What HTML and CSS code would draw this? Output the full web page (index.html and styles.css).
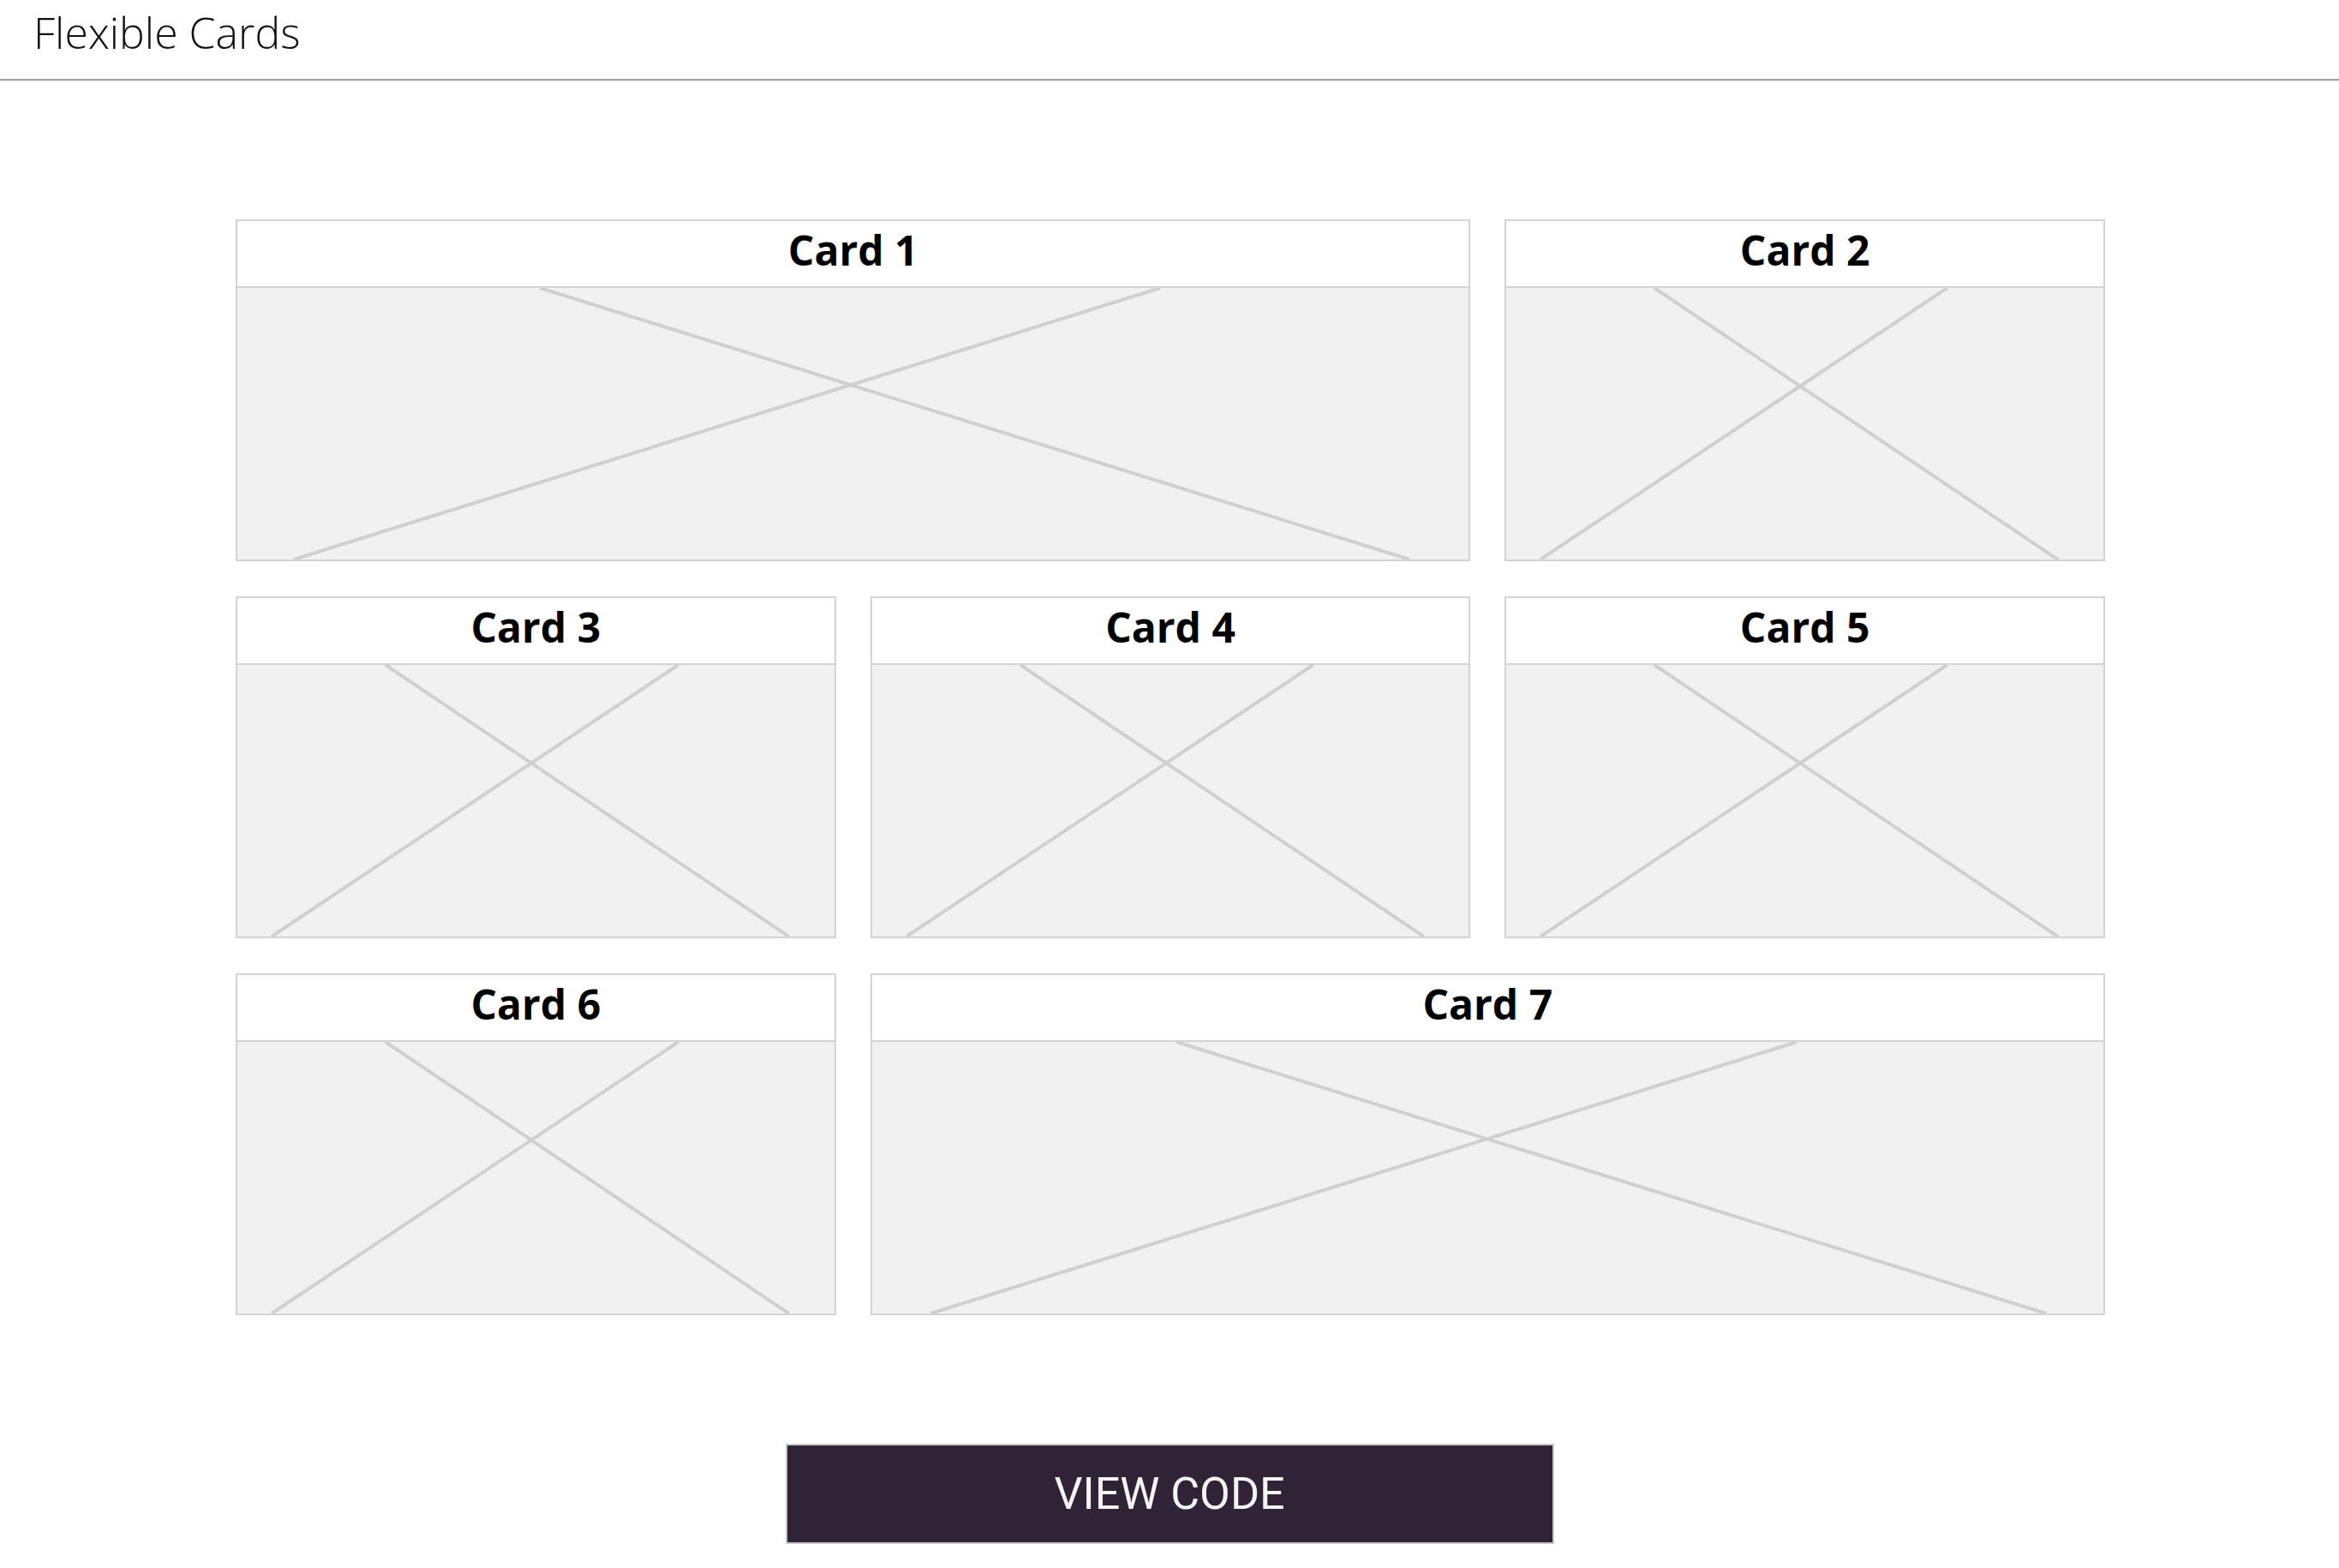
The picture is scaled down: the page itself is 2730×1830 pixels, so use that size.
FILE: index.html
```html
<!DOCTYPE html>
<html lang="en">
<head>
<meta charset="utf-8">
<title>Flexible Cards</title>
<link rel="stylesheet" href="styles.css">
</head>
<body>
<header class="topbar">
  <h1 class="topbar-title">Flexible Cards</h1>
</header>
<main class="page">
  <section class="grid">
    <article class="card span-2">
      <div class="card-head">Card 1</div>
      <div class="card-img">
        <svg viewBox="0 0 1437 317" preserveAspectRatio="none"><line x1="353" y1="0" x2="1368" y2="317"/><line x1="1077" y1="0" x2="66" y2="317"/></svg>
      </div>
    </article>
    <article class="card">
      <div class="card-head">Card 2</div>
      <div class="card-img">
        <svg viewBox="0 0 697 317" preserveAspectRatio="none"><line x1="173" y1="0" x2="644" y2="317"/><line x1="515" y1="0" x2="40" y2="317"/></svg>
      </div>
    </article>
    <article class="card">
      <div class="card-head">Card 3</div>
      <div class="card-img">
        <svg viewBox="0 0 697 317" preserveAspectRatio="none"><line x1="173" y1="0" x2="644" y2="317"/><line x1="515" y1="0" x2="40" y2="317"/></svg>
      </div>
    </article>
    <article class="card">
      <div class="card-head">Card 4</div>
      <div class="card-img">
        <svg viewBox="0 0 697 317" preserveAspectRatio="none"><line x1="173" y1="0" x2="644" y2="317"/><line x1="515" y1="0" x2="40" y2="317"/></svg>
      </div>
    </article>
    <article class="card">
      <div class="card-head">Card 5</div>
      <div class="card-img">
        <svg viewBox="0 0 697 317" preserveAspectRatio="none"><line x1="173" y1="0" x2="644" y2="317"/><line x1="515" y1="0" x2="40" y2="317"/></svg>
      </div>
    </article>
    <article class="card">
      <div class="card-head">Card 6</div>
      <div class="card-img">
        <svg viewBox="0 0 697 317" preserveAspectRatio="none"><line x1="173" y1="0" x2="644" y2="317"/><line x1="515" y1="0" x2="40" y2="317"/></svg>
      </div>
    </article>
    <article class="card span-2">
      <div class="card-head">Card 7</div>
      <div class="card-img">
        <svg viewBox="0 0 1437 317" preserveAspectRatio="none"><line x1="355" y1="0" x2="1370" y2="317"/><line x1="1079" y1="0" x2="68" y2="317"/></svg>
      </div>
    </article>
  </section>
  <div class="actions">
    <button class="view-code" type="button">VIEW CODE</button>
  </div>
</main>
</body>
</html>
```
FILE: styles.css
```css
* {
  box-sizing: border-box;
}

html, body {
  margin: 0;
  padding: 0;
  background: #ffffff;
}

body {
  font-family: "Open Sans", "Noto Sans", sans-serif;
  color: #000;
}

.topbar {
  height: 94px;
  padding: 0 0 0 39px;
  border-bottom: 2px solid #a3a3a3;
  box-shadow: 0 1px 1px rgba(0, 0, 0, 0.08);
}

.topbar-title {
  margin: 0;
  font-family: "Open Sans", sans-serif;
  font-weight: 300;
  font-size: 50px;
  line-height: 77px;
  color: #111;
}

.page {
  padding-top: 162px;
}

.grid {
  width: 2182px;
  margin: 0 0 0 275px;
  display: grid;
  grid-template-columns: repeat(3, 1fr);
  column-gap: 40px;
  row-gap: 41px;
}

.card {
  height: 399px;
  border: 2px solid #d3d3d3;
  display: flex;
  flex-direction: column;
  background: #fff;
}

.span-2 {
  grid-column: span 2;
}

.card-head {
  height: 78px;
  padding-bottom: 9px;
  border-bottom: 2px solid #d3d3d3;
  text-align: center;
  font-family: "Open Sans", sans-serif;
  font-weight: 700;
  font-size: 48px;
  line-height: 67px;
  color: #000;
  background: #fff;
}

.card-img {
  flex: 1;
  background: #f1f1f1;
  overflow: hidden;
}

.card-img svg {
  display: block;
  width: 100%;
  height: 100%;
}

.card-img line {
  stroke: #d0d0d0;
  stroke-width: 4px;
  vector-effect: non-scaling-stroke;
}

.actions {
  display: flex;
  justify-content: center;
  padding-top: 150px;
  padding-bottom: 26px;
}

.view-code {
  width: 897px;
  height: 117px;
  display: flex;
  align-items: center;
  justify-content: center;
  background: #2f2335;
  border: 2px solid #c9c9c9;
  color: #f4f4f4;
  font-family: Roboto, "Liberation Sans", sans-serif;
  font-weight: 400;
  font-size: 52px;
  padding: 0;
  cursor: pointer;
}
```
